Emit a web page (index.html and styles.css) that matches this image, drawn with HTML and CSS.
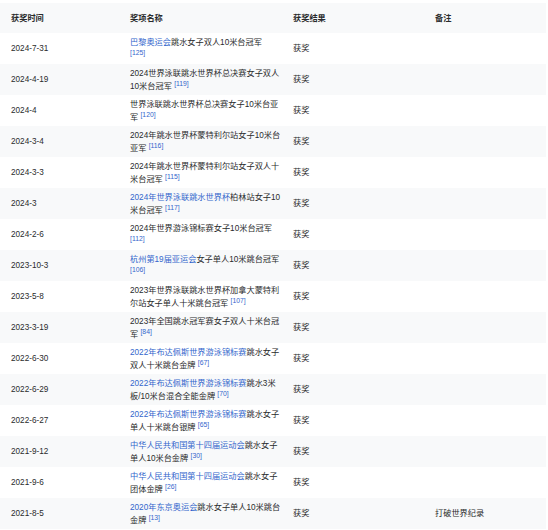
FILE: index.html
```html
<!DOCTYPE html>
<html lang="zh">
<head>
<meta charset="utf-8">
<link rel="stylesheet" href="styles.css">
</head>
<body>
<table class="awards">
  <colgroup>
    <col class="c-date"><col class="c-name"><col class="c-result"><col class="c-note">
  </colgroup>
  <thead>
    <tr><th>获奖时间</th><th>奖项名称</th><th>获奖结果</th><th>备注</th></tr>
  </thead>
  <tbody>
    <tr><td>2024-7-31</td><td class="name"><a>巴黎奥运会</a>跳水女子双人10米台冠军<br> <sup>[125]</sup></td><td>获奖</td><td></td></tr>
    <tr><td>2024-4-19</td><td class="name">2024世界泳联跳水世界杯总决赛女子双人<br>10米台冠军 <sup>[119]</sup></td><td>获奖</td><td></td></tr>
    <tr><td>2024-4</td><td class="name">世界泳联跳水世界杯总决赛女子10米台亚<br>军 <sup>[120]</sup></td><td>获奖</td><td></td></tr>
    <tr><td>2024-3-4</td><td class="name">2024年跳水世界杯蒙特利尔站女子10米台<br>亚军 <sup>[116]</sup></td><td>获奖</td><td></td></tr>
    <tr><td>2024-3-3</td><td class="name">2024年跳水世界杯蒙特利尔站女子双人十<br>米台冠军 <sup>[115]</sup></td><td>获奖</td><td></td></tr>
    <tr><td>2024-3</td><td class="name"><a>2024年世界泳联跳水世界杯</a>柏林站女子10<br>米台冠军 <sup>[117]</sup></td><td>获奖</td><td></td></tr>
    <tr><td>2024-2-6</td><td class="name">2024年世界游泳锦标赛女子10米台冠军<br> <sup>[112]</sup></td><td>获奖</td><td></td></tr>
    <tr><td>2023-10-3</td><td class="name"><a>杭州第19届亚运会</a>女子单人10米跳台冠军<br> <sup>[106]</sup></td><td>获奖</td><td></td></tr>
    <tr><td>2023-5-8</td><td class="name">2023年世界泳联跳水世界杯加拿大蒙特利<br>尔站女子单人十米跳台冠军 <sup>[107]</sup></td><td>获奖</td><td></td></tr>
    <tr><td>2023-3-19</td><td class="name">2023年全国跳水冠军赛女子双人十米台冠<br>军 <sup>[84]</sup></td><td>获奖</td><td></td></tr>
    <tr><td>2022-6-30</td><td class="name"><a>2022年布达佩斯世界游泳锦标赛</a>跳水女子<br>双人十米跳台金牌 <sup>[67]</sup></td><td>获奖</td><td></td></tr>
    <tr><td>2022-6-29</td><td class="name"><a>2022年布达佩斯世界游泳锦标赛</a>跳水3米<br>板/10米台混合全能金牌 <sup>[70]</sup></td><td>获奖</td><td></td></tr>
    <tr><td>2022-6-27</td><td class="name"><a>2022年布达佩斯世界游泳锦标赛</a>跳水女子<br>单人十米跳台银牌 <sup>[65]</sup></td><td>获奖</td><td></td></tr>
    <tr><td>2021-9-12</td><td class="name"><a>中华人民共和国第十四届运动会</a>跳水女子<br>单人10米台金牌 <sup>[30]</sup></td><td>获奖</td><td></td></tr>
    <tr><td>2021-9-6</td><td class="name"><a>中华人民共和国第十四届运动会</a>跳水女子<br>团体金牌 <sup>[26]</sup></td><td>获奖</td><td></td></tr>
    <tr><td>2021-8-5</td><td class="name"><a>2020年东京奥运会</a>跳水女子单人10米跳台<br>金牌 <sup>[13]</sup></td><td>获奖</td><td>打破世界纪录</td></tr>
  </tbody>
</table>
</body>
</html>
```

FILE: styles.css
```css
html, body {
  margin: 0;
  padding: 0;
  background: #fff;
}
body {
  padding-top: 3px;
  font-family: "Liberation Sans", "Noto Sans CJK SC", sans-serif;
  font-size: 8.2px;
  color: #2a2b2c;
}
.awards {
  width: 546px;
  border-collapse: collapse;
  table-layout: fixed;
}
.c-date { width: 120px; }
.c-name { width: 163px; }
.c-result { width: 142px; }
.c-note { width: 121px; }
.awards th {
  text-align: left;
  font-weight: bold;
  background: #f8f9fa;
  padding: 8.5px 10px;
  line-height: 13px;
  vertical-align: middle;
}
.awards td {
  padding: 2.5px 10px;
  line-height: 13px;
  height: 26px;
  vertical-align: middle;
}
.awards th:first-child,
.awards td:first-child {
  padding-left: 11px;
}
.awards tbody tr:nth-child(even) td {
  background: #f8f9fa;
}
.awards td.name {
  white-space: nowrap;
}
.awards a {
  color: #3366cc;
  text-decoration: none;
}
.awards sup {
  font-size: 6.8px;
  line-height: 1;
  color: #3366cc;
  vertical-align: 3px;
}
```
